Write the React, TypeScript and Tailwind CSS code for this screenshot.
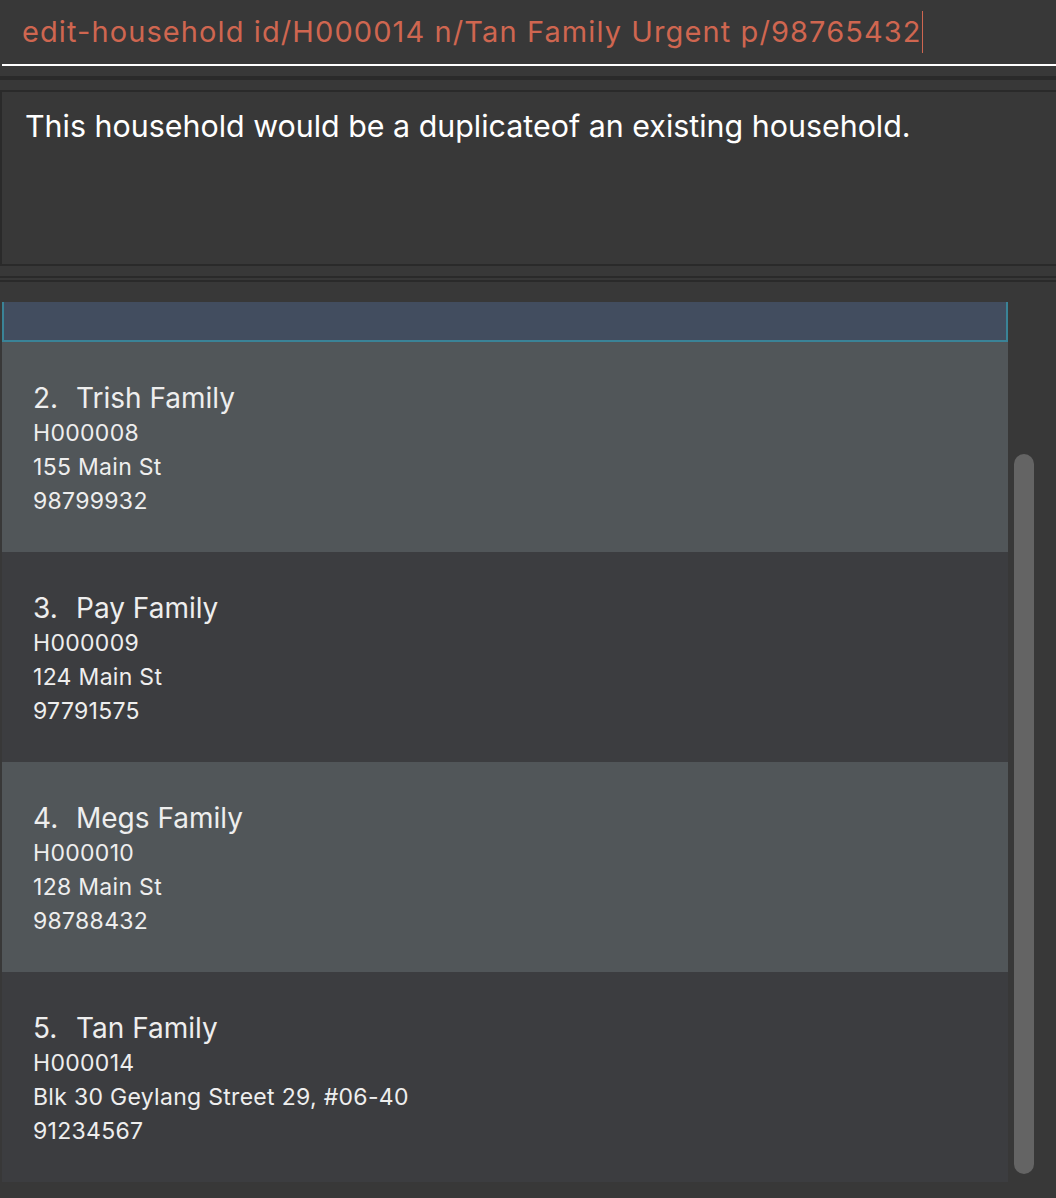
import React from 'react';

type Household = {
  index: number;
  name: string;
  id: string;
  address: string;
  phone: string;
};

const households: Household[] = [
  { index: 2, name: 'Trish Family', id: 'H000008', address: '155 Main St', phone: '98799932' },
  { index: 3, name: 'Pay Family', id: 'H000009', address: '124 Main St', phone: '97791575' },
  { index: 4, name: 'Megs Family', id: 'H000010', address: '128 Main St', phone: '98788432' },
  { index: 5, name: 'Tan Family', id: 'H000014', address: 'Blk 30 Geylang Street 29, #06-40', phone: '91234567' },
];

function HouseholdCard({ h, light }: { h: Household; light: boolean }) {
  return (
    <div className={`h-[210px] shrink-0 pl-[31px] pt-[38px] text-[#eeeeee] ${light ? 'bg-[#515659]' : 'bg-[#3c3d40]'}`}>
      <div className="flex text-[28px] leading-[36px]">
        <span className="w-[43px]">{h.index}.</span>
        <span>{h.name}</span>
      </div>
      <div className="text-[23px] leading-[34px] tracking-[0.3px]">{h.id}</div>
      <div className="text-[23px] leading-[34px] tracking-[0.3px]">{h.address}</div>
      <div className="text-[23px] leading-[34px] tracking-[0.3px]">{h.phone}</div>
    </div>
  );
}

export default function App() {
  return (
    <div className="w-[1056px] h-[1198px] bg-[#383838] font-['Inter','Liberation_Sans',sans-serif] overflow-hidden flex flex-col">
      {/* command box */}
      <div className="h-[64px] shrink-0 pl-[22px] flex items-center">
        <span className="text-[29px] tracking-[1.1px] text-[#cf6650] whitespace-nowrap">edit-household id/H000014 n/Tan Family Urgent p/98765432</span>
        <span className="w-[1px] h-[42px] bg-[#cf6650]" />
      </div>
      <div className="h-[2px] ml-[2px] bg-white shrink-0" />
      <div className="h-[10px] shrink-0" />
      <div className="h-[4px] bg-[#2a2a2a] shrink-0" />
      <div className="h-[10px] shrink-0" />

      {/* result display */}
      <div className="h-[176px] shrink-0 border-t-2 border-l-2 border-b-2 border-[#2a2a2a] pl-[23px] pt-[14px]">
        <p className="text-[30.4px] leading-[40px] text-white whitespace-nowrap">
          This household would be a duplicateof an existing household.
        </p>
      </div>

      <div className="h-[10px] shrink-0" />
      <div className="h-[2px] bg-[#2a2a2a] shrink-0" />
      <div className="h-[2px] shrink-0" />
      <div className="h-[2px] bg-[#2a2a2a] shrink-0" />
      <div className="h-[20px] shrink-0" />

      {/* household list */}
      <div className="flex flex-1 min-h-0">
        <div className="ml-[2px] w-[1006px] flex flex-col overflow-hidden">
          <div className="h-[40px] shrink-0 bg-[#424d5f] border-l-2 border-r-2 border-b-2 border-[#3a8397]" />
          {households.map((h, i) => (
            <HouseholdCard key={h.id} h={h} light={i % 2 === 0} />
          ))}
        </div>
        <div className="ml-[6px] w-[20px] pt-[152px]">
          <div className="h-[720px] rounded-[10px] bg-[#646464]" />
        </div>
      </div>
    </div>
  );
}
